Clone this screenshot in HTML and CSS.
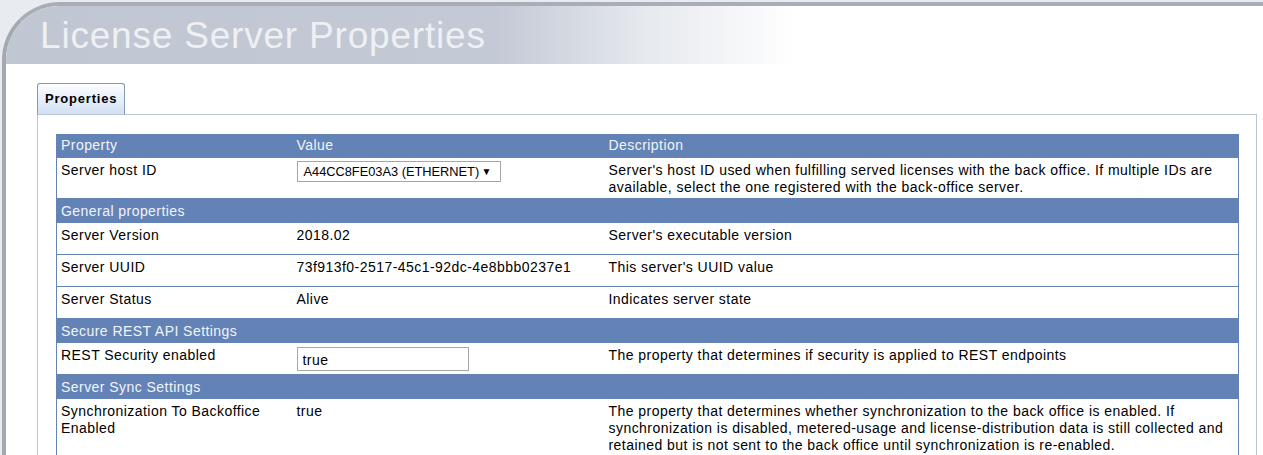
FILE: index.html
```html
<!DOCTYPE html>
<html>

<head>
	<meta charset="utf-8">
	<title>License Server Properties</title>
	<link rel="stylesheet" href="styles.css">
</head>

<body>
	<div class="page">
		<div class="header">
			<h1 class="title">License Server Properties</h1>
		</div>
		<div class="content">
			<div class="tabs">
				<span class="tab">Properties</span>
			</div>
			<div class="panel">
				<table class="props">
					<colgroup>
						<col class="col-prop">
						<col class="col-value">
						<col class="col-desc">
					</colgroup>
					<tr class="head">
						<th>Property</th>
						<th>Value</th>
						<th>Description</th>
					</tr>
					<tr class="two">
						<td>Server host ID</td>
						<td>
							<div class="select-box"><span>A44CC8FE03A3 (ETHERNET)</span><span class="arrow">▼</span></div>
						</td>
						<td>Server's host ID used when fulfilling served licenses with the back office. If multiple IDs are available, select the one registered with the back-office server.</td>
					</tr>
					<tr class="section">
						<td colspan="3">General properties</td>
					</tr>
					<tr>
						<td>Server Version</td>
						<td>2018.02</td>
						<td>Server's executable version</td>
					</tr>
					<tr>
						<td>Server UUID</td>
						<td>73f913f0-2517-45c1-92dc-4e8bbb0237e1</td>
						<td>This server's UUID value</td>
					</tr>
					<tr>
						<td>Server Status</td>
						<td>Alive</td>
						<td>Indicates server state</td>
					</tr>
					<tr class="section">
						<td colspan="3">Secure REST API Settings</td>
					</tr>
					<tr>
						<td>REST Security enabled</td>
						<td><input class="text-input" type="text" value="true" /></td>
						<td>The property that determines if security is applied to REST endpoints</td>
					</tr>
					<tr class="section">
						<td colspan="3">Server Sync Settings</td>
					</tr>
					<tr>
						<td>Synchronization To Backoffice Enabled</td>
						<td>true</td>
						<td>The property that determines whether synchronization to the back office is enabled. If synchronization is disabled, metered-usage and license-distribution data is still collected and retained but is not sent to the back office until synchronization is re-enabled.</td>
					</tr>
				</table>
			</div>
		</div>
	</div>
</body>

</html>
```

FILE: styles.css
```css
* {
	margin: 0;
	padding: 0;
	box-sizing: border-box;
}
html,
body {
	height: 100%;
}
body {
	background-color: #e8ebf0;
	font-family: "Liberation Sans", Arial, sans-serif;
	font-size: 14px;
	letter-spacing: 0.45px;
	color: #000000;
	overflow: hidden;
}
.page {
	margin: 2px 0 0 2px;
	min-height: 100%;
	background-color: #ffffff;
	border-top: 4px solid #a8adb7;
	border-left: 4px solid #a3a8b1;
	border-top-left-radius: 58px;
	overflow: hidden;
}
.header {
	height: 58px;
	padding: 2px 0 0 34px;
	background: linear-gradient(to right, #c0c6d2 0px, #c3c9d5 490px, #e6e9ee 640px, #ffffff 790px);
}
.title {
	font-weight: normal;
	font-size: 37px;
	line-height: 56px;
	color: #eef0f4;
	letter-spacing: 0.8px;
}
.content {
	padding: 19px 0 0 31px;
}
.tabs {
	display: flex;
}
.tab {
	display: block;
	height: 32px;
	margin-bottom: -1px;
	padding: 0 7px;
	line-height: 30px;
	font-size: 13px;
	font-weight: bold;
	letter-spacing: 0.8px;
	border: 1px solid #7e9bbd;
	border-bottom-color: #b9c4d4;
	border-radius: 3px 3px 0 0;
	background: linear-gradient(to bottom, #fcfdff, #d2e0f4);
}
.panel {
	margin-right: 6px;
	padding: 19px 17px 0 18px;
	height: 400px;
	border-top: 1px solid #b9c4d4;
	border-left: 1px solid #b9c4d4;
	border-right: 1px solid #b9c4d4;
}
.props {
	width: 1183px;
	table-layout: fixed;
	border-collapse: collapse;
	border-left: 1px solid #6383b6;
	border-right: 1px solid #6383b6;
}
.col-prop {
	width: 236px;
}
.col-value {
	width: 312px;
}
.props th,
.props td {
	padding: 4px 4px 2px;
	line-height: 17px;
	text-align: left;
	vertical-align: top;
	font-weight: normal;
}
.props tr {
	height: 32px;
	border-bottom: 1px solid #6383b6;
}
.props tr.head {
	height: 23px;
	background-color: #6383b6;
	color: #f2f4f8;
}
.props tr.head th {
	padding-top: 3px;
}
.props tr.section {
	height: 24px;
	background-color: #6383b6;
	color: #f2f4f8;
}
.props tr.section td {
	padding-top: 4px;
}
.select-box {
	display: flex;
	justify-content: space-between;
	align-items: center;
	width: 204px;
	height: 21px;
	margin-top: -1px;
	padding: 0 8px 0 6px;
	white-space: nowrap;
	font-size: 12.8px;
	letter-spacing: 0;
	border: 1px solid #a6a6a6;
	background-color: #ffffff;
}
.arrow {
	font-size: 10px;
}
.text-input {
	display: block;
	width: 172px;
	height: 24px;
	padding: 3px 5px 0;
	border: 1px solid #a8a8a8;
	font-family: inherit;
	font-size: 14px;
	letter-spacing: 0.45px;
	outline: none;
}
```
